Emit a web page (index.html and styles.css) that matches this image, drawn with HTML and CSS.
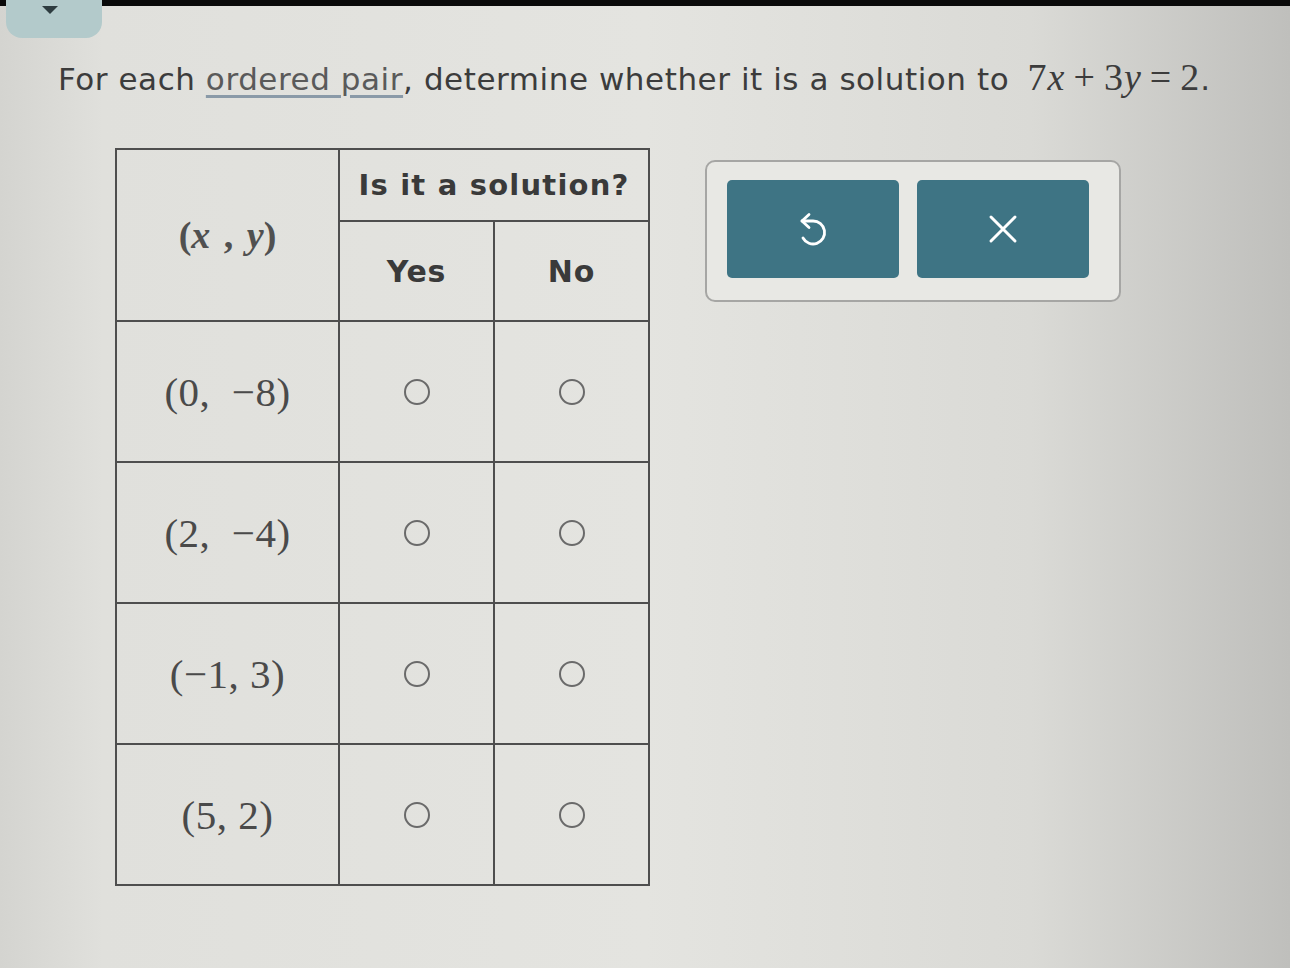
FILE: index.html
```html
<!DOCTYPE html>
<html>
<head>
<meta charset="utf-8">
<link rel="stylesheet" href="styles.css">
</head>
<body>
<div class="topbar"></div>
<div class="page">
  <div class="tab"><span class="chev"></span></div>
  <p class="prompt">For each <span class="link">ordered pair</span>, determine whether it is a solution to <span class="math"><span>7</span><i>x</i><span class="op">+</span><span>3</span><i>y</i><span class="op">=</span><span>2</span></span>.</p>
  <div class="content">
    <table class="grid">
      <thead>
        <tr>
          <th rowspan="2" class="pairhead"><span class="math">(<i>x</i> , <i>y</i>)</span></th>
          <th colspan="2" class="q">Is it a solution?</th>
        </tr>
        <tr>
          <th class="yn">Yes</th>
          <th class="yn">No</th>
        </tr>
      </thead>
      <tbody>
        <tr><td class="pair"><span class="math">(0,&nbsp; &minus;8)</span></td><td><span class="radio"></span></td><td><span class="radio"></span></td></tr>
        <tr><td class="pair"><span class="math">(2,&nbsp; &minus;4)</span></td><td><span class="radio"></span></td><td><span class="radio"></span></td></tr>
        <tr><td class="pair"><span class="math">(&minus;1, 3)</span></td><td><span class="radio"></span></td><td><span class="radio"></span></td></tr>
        <tr><td class="pair"><span class="math">(5, 2)</span></td><td><span class="radio"></span></td><td><span class="radio"></span></td></tr>
      </tbody>
    </table>
    <div class="panel">
      <button class="btn" aria-label="Reset">
        <svg width="30" height="36" viewBox="0 0 30 36" fill="none" stroke="#fff" stroke-width="2.8" stroke-linecap="round" stroke-linejoin="round">
          <path d="M4 10 H15 A11.5 11.5 0 1 1 5 27"/>
          <path d="M11 3.5 L4 10 L11 16.5"/>
        </svg>
      </button>
      <button class="btn" aria-label="Clear">
        <svg width="30" height="30" viewBox="0 0 30 30" stroke="#fff" stroke-width="3" stroke-linecap="round">
          <path d="M3 3 L27 27 M27 3 L3 27"/>
        </svg>
      </button>
    </div>
  </div>
</div>
</body>
</html>
```

FILE: styles.css
```css
html, body {
  margin: 0;
  padding: 0;
}
body {
  width: 1290px;
  height: 968px;
  overflow: hidden;
  background: linear-gradient(90deg, #d4d4d0 0%, #e0e0dc 8%, #e4e4e0 50%, #dadad6 80%, #bfbfbc 100%);
  font-family: "DejaVu Sans", Verdana, sans-serif;
  color: #3c3c3c;
}
.topbar {
  height: 6px;
  background: #0a0a0a;
}
.page {
  position: relative;
}
.tab {
  position: absolute;
  left: 6px;
  top: -6px;
  width: 96px;
  height: 38px;
  border-radius: 0 0 16px 16px;
  background: #b3cacb;
  display: flex;
  justify-content: center;
}
.chev {
  margin-top: 6px;
  margin-left: -8px;
  width: 0;
  height: 0;
  border-left: 8px solid transparent;
  border-right: 8px solid transparent;
  border-top: 8px solid #2e3c40;
}
.prompt {
  margin: 0;
  padding: 50px 0 0 58px;
  font-size: 31px;
  line-height: 42px;
  letter-spacing: 0.55px;
  white-space: nowrap;
}
.link {
  color: #5a5a5a;
  text-decoration: underline;
  text-decoration-color: #8a9aa8;
  text-underline-offset: 5px;
}
.math {
  font-family: "Liberation Serif", "Times New Roman", serif;
  font-size: 38px;
  color: #3c3c3c;
  letter-spacing: 0;
}
.prompt .math {
  margin-left: 8px;
  letter-spacing: 1px;
}
.math .op {
  margin: 0 8px;
}
.content {
  display: flex;
  align-items: flex-start;
  padding: 48px 0 0 115px;
}
.grid {
  border-collapse: collapse;
  border: 2px solid #4e4e4e;
  table-layout: fixed;
}
.grid th, .grid td {
  border: 2px solid #4e4e4e;
  text-align: center;
  padding: 0;
}
.grid th {
  color: #3a3a3a;
}
.pairhead {
  width: 221px;
}
.pairhead .math {
  font-size: 38px;
  color: #505050;
  word-spacing: 4px;
}
.q {
  height: 70px;
  font-size: 29px;
  font-weight: bold;
  letter-spacing: 1.2px;
}
.yn {
  width: 153px;
  height: 98px;
  font-size: 30px;
  font-weight: bold;
  letter-spacing: 0.8px;
}
.grid tbody td {
  height: 139px;
}
.pair .math {
  font-size: 41px;
  color: #4a4a4a;
  letter-spacing: 0.5px;
}
.radio {
  display: inline-block;
  width: 22px;
  height: 22px;
  border: 2.5px solid #6a6a6a;
  border-radius: 50%;
  vertical-align: middle;
}
.panel {
  margin: 12px 0 0 55px;
  padding: 18px 30px 22px 20px;
  border: 2px solid #a6a6a4;
  border-radius: 10px;
  background: #e8e8e4;
  display: flex;
  gap: 18px;
}
.btn {
  width: 172px;
  height: 98px;
  border: none;
  border-radius: 5px;
  background: #3e7484;
  display: flex;
  align-items: center;
  justify-content: center;
  padding: 0;
}
```
